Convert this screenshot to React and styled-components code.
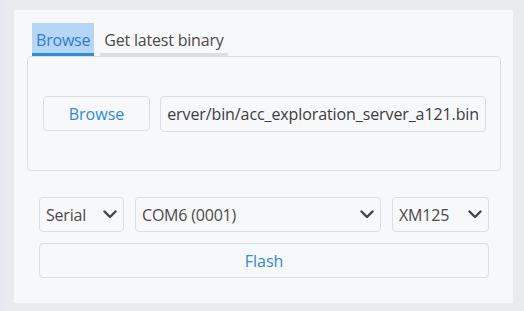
import React from 'react'
import styled, { createGlobalStyle } from 'styled-components'

const GlobalStyle = createGlobalStyle`
  html, body {
    margin: 0;
    padding: 0;
    background: #e9ecef;
    font-family: "Open Sans", "Noto Sans", sans-serif;
  }
`

const Page = styled.div`
  width: 524px;
  height: 311px;
  box-sizing: border-box;
  padding: 10px 11px 8px 10px;
  background: #e9ecef;
  border-left: 4px solid #e4e9f1;
`

const Panel = styled.div`
  height: 100%;
  box-sizing: border-box;
  background: #f7f8f9;
  padding: 13px 12px 0 13px;
  display: flex;
  flex-direction: column;
`

const TabBar = styled.div`
  display: flex;
  gap: 6px;
  padding-left: 5px;
`

const Tab = styled.div`
  height: 33px;
  box-sizing: border-box;
  padding: 3px 4px 0 4px;
  display: flex;
  align-items: center;
  font-size: 16px;
  letter-spacing: -0.2px;
  color: ${({active}) => active ? '#2b7fcc' : '#4a4a4a'};
  background: ${({active}) => active ? '#b7d5f6' : 'transparent'};
  border-bottom: ${({active}) => active ? '3px solid #2b8ee0' : '3px solid #dcdfe2'};
`

const TabBody = styled.div`
  height: 115px;
  box-sizing: border-box;
  border: 1px solid #dcdee1;
  border-radius: 4px;
  display: flex;
  align-items: center;
  gap: 10px;
  padding: 0 14px 0 15px;
`

const Button = styled.div`
  height: 35px;
  box-sizing: border-box;
  border: 1px solid #dcdee1;
  border-radius: 4px;
  background: #f7f8f9;
  color: #2b8ad8;
  font-size: 16px;
  display: flex;
  align-items: center;
  justify-content: center;
  width: ${({w}) => w ? w + 'px' : 'auto'};
  flex-shrink: 0;
`

const Field = styled.div`
  flex: 1;
  height: 36px;
  box-sizing: border-box;
  border: 1px solid #dcdee1;
  border-radius: 4px;
  display: flex;
  align-items: center;
  justify-content: flex-end;
  overflow: hidden;
  white-space: nowrap;
  padding: 0 6px;
  font-size: 16px;
  letter-spacing: -0.1px;
  color: #3c3c3c;
`

const Controls = styled.div`
  display: flex;
  flex-direction: column;
  gap: 11px;
  padding: 26px 12px 0 12px;
`

const Row = styled.div`
  display: flex;
  gap: 11px;
`

const Select = styled.div`
  height: 35px;
  box-sizing: border-box;
  width: ${({w}) => w ? w + 'px' : 'auto'};
  flex: ${({grow}) => grow ? 1 : 'none'};
  border: 1px solid #dcdee1;
  border-radius: 4px;
  display: flex;
  align-items: center;
  justify-content: space-between;
  padding: 0 6px 0 6px;
  font-size: 16px;
  letter-spacing: -0.2px;
  color: #4a4a4a;
`

const Chevron = () => (
  <svg width="14" height="9" viewBox="0 0 14 9">
    <path d="M1.5 1.5 L7 7 L12.5 1.5" fill="none" stroke="#444" strokeWidth="2.4" strokeLinecap="round" strokeLinejoin="round" />
  </svg>
)

export default function App() {
  return (
    <>
      <GlobalStyle />
      <Page>
        <Panel>
          <TabBar>
            <Tab active>Browse</Tab>
            <Tab>Get latest binary</Tab>
          </TabBar>
          <TabBody>
            <Button w={107}>Browse</Button>
            <Field>erver/bin/acc_exploration_server_a121.bin</Field>
          </TabBody>
          <Controls>
            <Row>
              <Select w={85}>Serial <Chevron /></Select>
              <Select grow>COM6 (0001) <Chevron /></Select>
              <Select w={97}>XM125 <Chevron /></Select>
            </Row>
            <Button>Flash</Button>
          </Controls>
        </Panel>
      </Page>
    </>
  )
}
